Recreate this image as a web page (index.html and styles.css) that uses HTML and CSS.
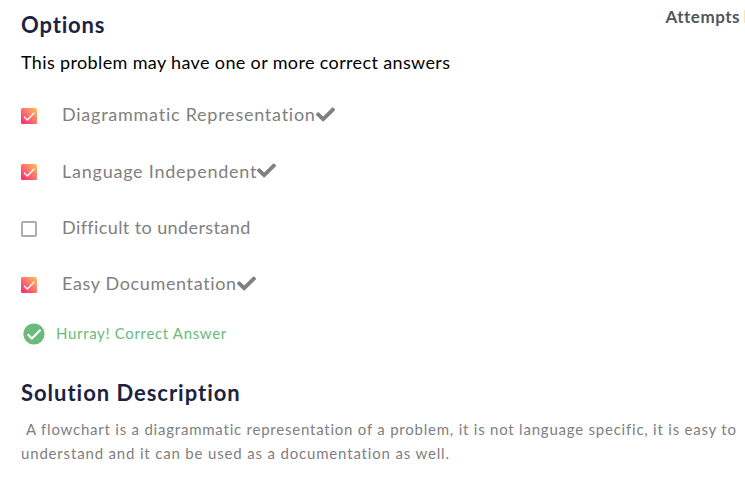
FILE: index.html
```
<!DOCTYPE html>
<html lang="en">
<head>
<meta charset="utf-8">
<title>Options</title>
<link rel="stylesheet" href="styles.css">
</head>
<body>
<svg class="defs" width="0" height="0" aria-hidden="true">
  <defs>
    <linearGradient id="warm" x1="0" y1="1" x2="1" y2="0"><stop offset="0" stop-color="#fb2079"/><stop offset="1" stop-color="#ffc45c"/></linearGradient>
    <symbol id="checked" viewBox="0 0 16 16"><rect width="16" height="16" rx="1.5" fill="url(#warm)"/><path d="M3 8.8 6.3 12 13.3 4.7" fill="none" stroke="#fff" stroke-width="1.4"/></symbol>
    <symbol id="tick" viewBox="0 0 512 512"><path fill="#808080" d="M173.9 439.4 7.5 273c-10-10-10-26.200 0-36.200l36.200-36.200c10-10 26.200-10 36.200 0L192 312.700 432.100 72.600c10-10 26.200-10 36.200 0l36.200 36.200c10 10 10 26.200 0 36.200L210.100 439.400c-10 10-26.200 10-36.200 0z"/></symbol>
  </defs>
</svg>
<main class="page">
  <header class="top">
    <h2 class="title options-title">Options</h2>
    <div class="attempts"><span>Attempts</span><i class="edge"></i></div>
  </header>
  <p class="hint">This problem may have one or more correct answers</p>
  <ul class="options">
    <li class="option"><svg class="box"><use href="#checked"/></svg><span class="label diagram">Diagrammatic Representation</span><svg class="tick"><use href="#tick"/></svg></li>
    <li class="option"><svg class="box"><use href="#checked"/></svg><span class="label language">Language Independent</span><svg class="tick"><use href="#tick"/></svg></li>
    <li class="option"><span class="box empty"></span><span class="label difficult">Difficult to understand</span></li>
    <li class="option"><svg class="box"><use href="#checked"/></svg><span class="label easy">Easy Documentation</span><svg class="tick"><use href="#tick"/></svg></li>
  </ul>
  <div class="result">
    <svg class="badge" viewBox="0 0 22 22"><circle cx="11" cy="11" r="10.600" fill="#6aba7b"/><path d="m4.700 11.300 4.200 4.200 8.700-8.700" fill="none" stroke="#fff" stroke-width="2.100"/></svg>
    <span class="message">Hurray! Correct Answer</span>
  </div>
  <h2 class="title solution-title">Solution Description</h2>
  <p class="description"><span class="line first">A flowchart is a diagrammatic representation of a problem, it is not language specific, it is easy to</span> <span class="line second">understand and it can be used as a documentation as well.</span></p>
</main>
</body>
</html>
```
FILE: styles.css
```
* { box-sizing: border-box; }
body { margin: 0; background: #fff; font-family: Lato, sans-serif; overflow: hidden; }
.defs { display: block; width: 0; height: 0; }
.page { padding: 9px 0 0 21px; white-space: nowrap; }
.top { display: flex; justify-content: space-between; height: 37px; }
.title { margin: 0; color: #1b2341; font-size: 22px; line-height: 32px; font-weight: 700; letter-spacing: .85px; }
.attempts { display: flex; gap: 4px; color: #54565e; font-size: 17px; line-height: 15px; font-weight: 700; letter-spacing: .5px; }
.edge { width: 1px; height: 13px; margin-top: 1px; background: #ffe5ad; }
.hint { margin: 0; height: 41px; color: #000; font-size: 18px; line-height: 32px; letter-spacing: .36px; }
.options { margin: 0; padding: 0; list-style: none; }
.option { display: flex; align-items: center; height: 56.3px; color: #808080; font-size: 18px; }
.box { flex: none; width: 16px; height: 16px; margin: 2px 25px 0 0; }
.empty { border: 2px solid #acacac; border-radius: 2px; }
.label { line-height: 26px; padding-bottom: 1.4px; }
.diagram { letter-spacing: .75px; }
.language { letter-spacing: .76px; }
.difficult { letter-spacing: .4px; }
.easy { letter-spacing: .64px; }
.tick { width: 19px; height: 19px; flex: none; margin-bottom: 2px; }
.result { display: flex; align-items: center; height: 44px; color: #6aba7b; font-size: 15px; letter-spacing: .67px; }
.badge { width: 22px; height: 22px; margin: 0 11px 0 2px; }
.message { padding-bottom: 2px; }
.solution-title { margin-top: 21px; letter-spacing: .97px; }
.description { margin: 8px 0 0; color: #808080; font-size: 15px; line-height: 24px; }
.line { display: block; }
.first { padding-left: 5px; letter-spacing: .775px; }
.second { letter-spacing: .83px; }
```
